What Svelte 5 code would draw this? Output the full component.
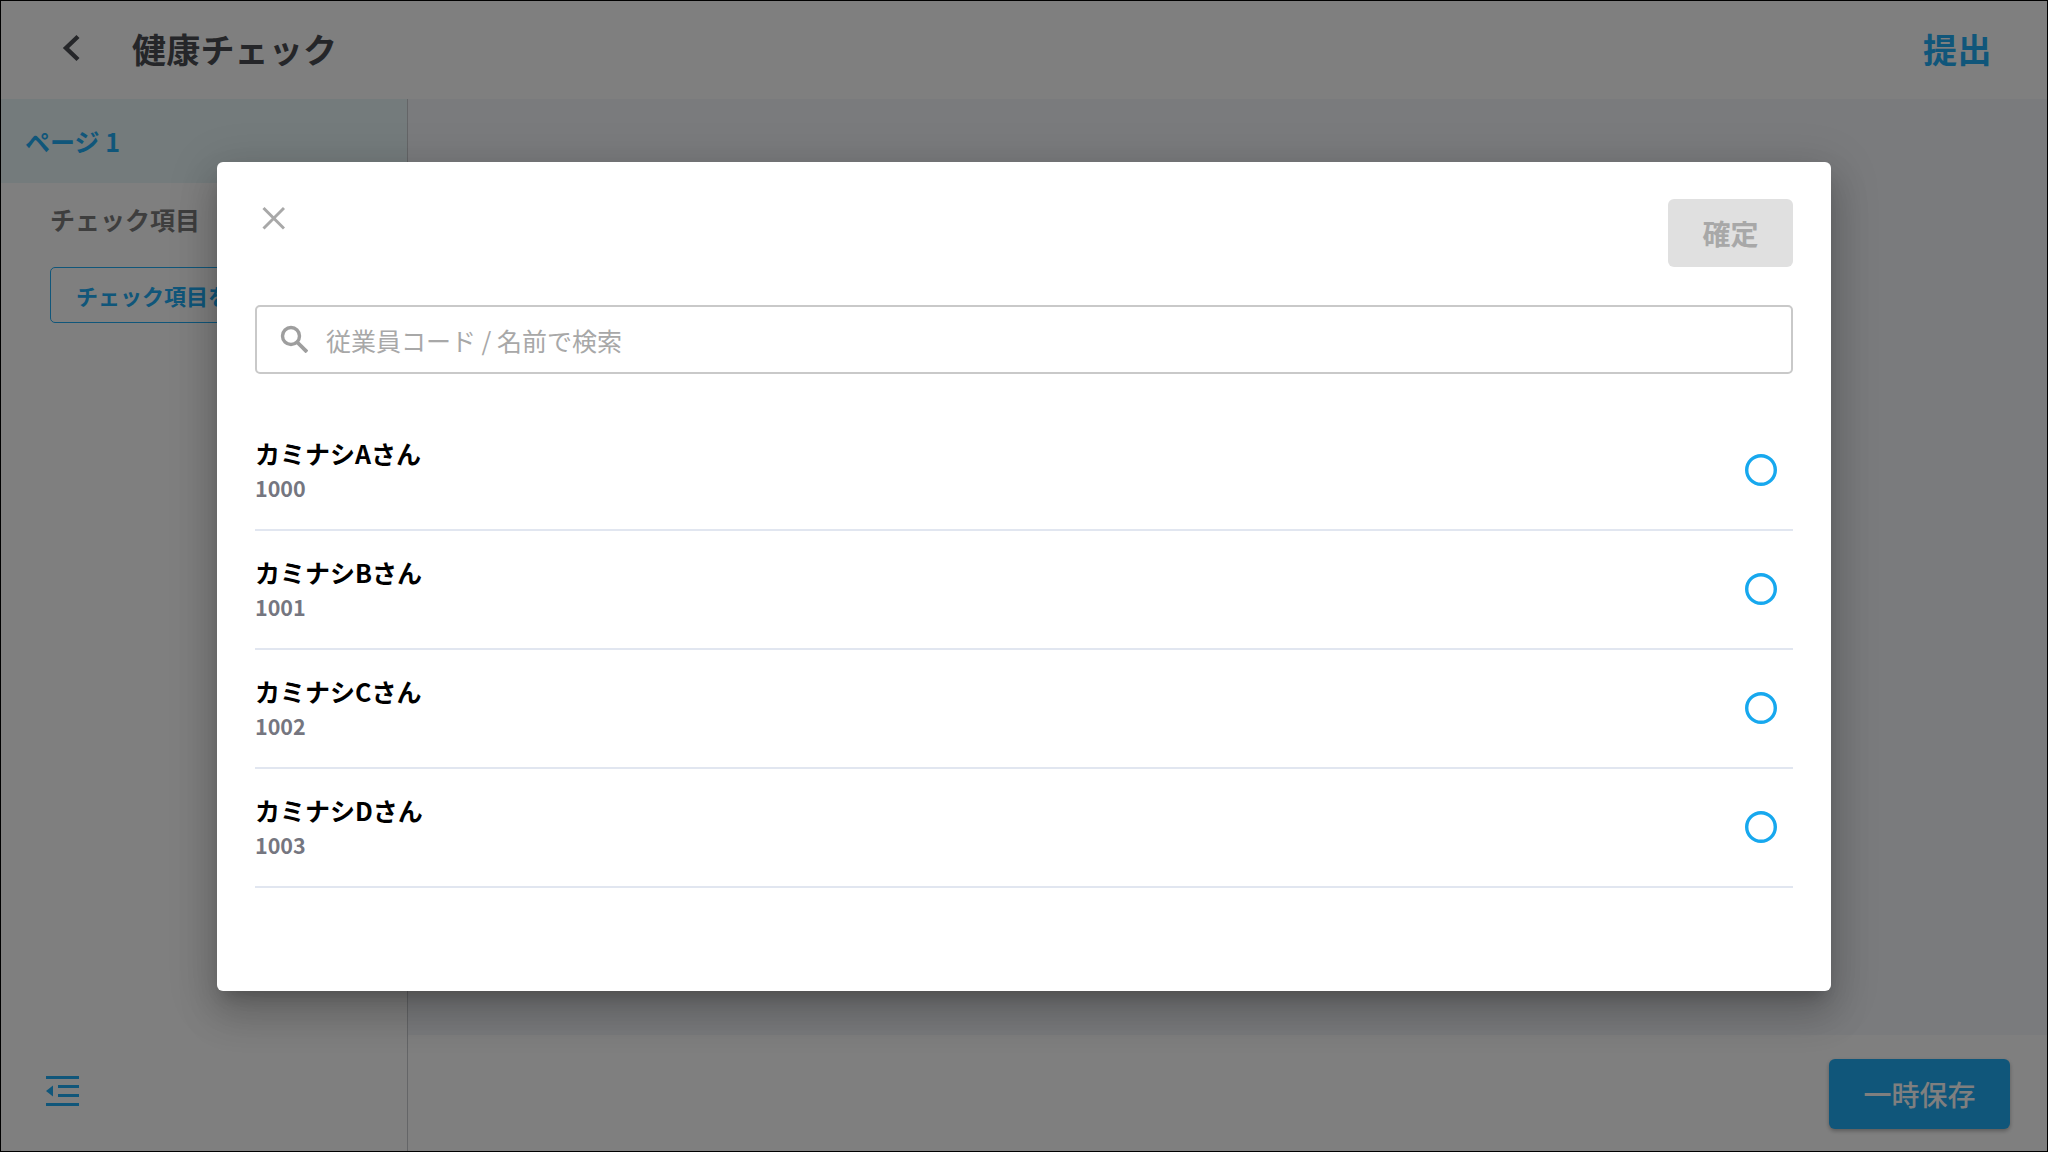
<script>
  const people = [
    { name: 'カミナシAさん', code: '1000' },
    { name: 'カミナシBさん', code: '1001' },
    { name: 'カミナシCさん', code: '1002' },
    { name: 'カミナシDさん', code: '1003' }
  ];
</script>

<div class="frame">
  <div class="page">
    <header class="topbar">
      <svg class="back" viewBox="0 0 20 30" width="20" height="30"><path d="M17 3.500 5 15 17 26.500" fill="none" stroke="#4b4d52" stroke-width="4.400"/></svg>
      <h1>健康チェック</h1>
      <button class="submit">提出</button>
    </header>
    <div class="body">
      <aside class="side">
        <div class="tab">ページ 1</div>
        <div class="side-main">
          <div class="label">チェック項目</div>
          <button class="add">チェック項目を追加</button>
        </div>
        <svg class="menu" viewBox="0 0 33 30" width="33" height="30">
          <g fill="#20acf4">
            <rect x="0" y="0" width="33" height="3"/>
            <rect x="12" y="9" width="21" height="3"/>
            <rect x="12" y="18" width="21" height="3"/>
            <rect x="0" y="27" width="33" height="3"/>
            <path d="M0 15 7 9.500v11z"/>
          </g>
        </svg>
      </aside>
      <main class="content">
        <div class="spacer"></div>
        <footer class="foot"><button class="save">一時保存</button></footer>
      </main>
    </div>
    <div class="overlay">
      <section class="modal">
        <div class="modal-top">
          <svg class="close" viewBox="0 0 24 24" width="24" height="24"><path d="M2.500 2 23 22.500M23 2 2.500 22.500" stroke="#a8a8a8" stroke-width="3" fill="none"/></svg>
          <button class="confirm">確定</button>
        </div>
        <div class="search">
          <svg viewBox="0 0 28 28" width="28" height="28"><circle cx="11" cy="11" r="8.500" fill="none" stroke="#9e9e9e" stroke-width="3.400"/><path d="M17 17 27 27" stroke="#9e9e9e" stroke-width="3.800"/></svg>
          <span class="hint">従業員コード / 名前で検索</span>
        </div>
        <ul>
          {#each people as p}
            <li>
              <div class="who">
                <div class="name">{p.name}</div>
                <div class="code">{p.code}</div>
              </div>
              <svg viewBox="0 0 32 32" width="32" height="32"><circle cx="16" cy="16" r="14.300" fill="none" stroke="#17a8ee" stroke-width="3.400"/></svg>
            </li>
          {/each}
        </ul>
      </section>
    </div>
  </div>
</div>

<style>
  :global(body) {
    margin: 0;
    font-family: "Noto Sans CJK JP", "Noto Sans", sans-serif;
  }
  .frame {
    width: 2048px;
    height: 1152px;
    box-sizing: border-box;
    border: 1px solid #000;
    overflow: hidden;
  }
  .page {
    position: relative;
    width: 100%;
    height: 100%;
    display: flex;
    flex-direction: column;
    background: #fff;
  }
  .topbar {
    height: 98px;
    flex: none;
    box-sizing: border-box;
    display: flex;
    align-items: center;
    padding: 0 55px 4px 60px;
    background: #fff;
  }
  .back { flex: none; }
  h1 {
    margin: 0 0 0 51px;
    font-size: 34px;
    letter-spacing: 0.2px;
    font-weight: 700;
    color: #4b4d52;
    flex: 1;
  }
  button {
    font-family: inherit;
    border: 0;
    padding: 0;
    background: none;
  }
  .submit {
    font-size: 34px;
    letter-spacing: 0.5px;
    font-weight: 700;
    color: #20acf4;
  }
  .body {
    flex: 1;
    display: flex;
    min-height: 0;
  }
  .side {
    width: 407px;
    flex: none;
    box-sizing: border-box;
    border-right: 1px solid #c8cace;
    display: flex;
    flex-direction: column;
    background: #fff;
  }
  .tab {
    height: 84px;
    display: flex;
    align-items: center;
    padding-left: 24px;
    background: #e8f6f8;
    font-size: 25px;
    font-weight: 700;
    color: #20acf4;
  }
  .side-main {
    flex: 1;
    padding: 17px 0 0 49px;
  }
  .label {
    font-size: 25px;
    font-weight: 700;
    color: #7c7c7c;
    line-height: 38px;
  }
  .add {
    margin-top: 29px;
    width: 340px;
    height: 56px;
    box-sizing: border-box;
    border: 1px solid #20acf4;
    border-radius: 5px;
    padding-left: 25px;
    text-align: left;
    font-size: 22px;
    font-weight: 700;
    color: #20acf4;
    white-space: nowrap;
  }
  .menu {
    margin: 0 0 45px 45px;
    flex: none;
  }
  .content {
    flex: 1;
    display: flex;
    flex-direction: column;
    background: #f5f6fa;
  }
  .spacer { flex: 1; }
  .foot {
    height: 116px;
    flex: none;
    box-sizing: border-box;
    padding: 24px 37px 0 0;
    display: flex;
    justify-content: flex-end;
    background: #fff;
  }
  .save {
    width: 181px;
    height: 70px;
    border-radius: 6px;
    background: #20acf4;
    color: #fff;
    font-size: 28px;
    font-weight: 500;
    box-shadow: 0 2px 4px rgba(0, 0, 0, .3);
  }
  .overlay {
    position: absolute;
    inset: 0;
    background: rgba(0, 0, 0, .5);
    display: flex;
    align-items: center;
    justify-content: center;
  }
  .modal {
    width: 1614px;
    height: 829px;
    flex: none;
    box-sizing: border-box;
    padding: 37px 38px 0;
    background: #fff;
    border-radius: 6px;
    box-shadow: 0 11px 15px -7px rgba(0, 0, 0, .2), 0 24px 38px 3px rgba(0, 0, 0, .14), 0 9px 46px 8px rgba(0, 0, 0, .12);
  }
  .modal-top {
    display: flex;
    justify-content: space-between;
    align-items: flex-start;
  }
  .close {
    margin: 7px 0 0 6px;
  }
  .confirm {
    width: 125px;
    height: 68px;
    border-radius: 6px;
    background: #e0e0e0;
    color: #a8a8a8;
    font-size: 28px;
    font-weight: 700;
  }
  .search {
    margin-top: 38px;
    height: 69px;
    box-sizing: border-box;
    border: 2px solid #c9c9c9;
    border-radius: 5px;
    display: flex;
    align-items: center;
    gap: 18px;
    padding-left: 23px;
    font-size: 25px;
    color: #a8a8a8;
  }
  .hint {
    padding-top: 2px;
  }
  ul {
    list-style: none;
    margin: 38px 0 0;
    padding: 0;
  }
  li {
    height: 119px;
    box-sizing: border-box;
    border-bottom: 2px solid #e1e6f0;
    display: flex;
    align-items: center;
    justify-content: space-between;
    padding-right: 16px;
  }
  .who {
    padding-top: 2px;
  }
  .name {
    font-size: 25px;
    font-weight: 700;
    color: #000;
    line-height: 34px;
  }
  .code {
    font-size: 21.5px;
    font-weight: 700;
    color: #757680;
    line-height: 36px;
  }
</style>
